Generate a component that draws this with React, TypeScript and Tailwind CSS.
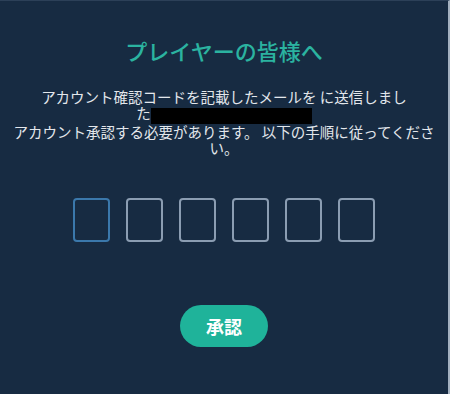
import { useState } from "react";

const FONT = { fontFamily: '"Noto Sans CJK JP", "Noto Sans", sans-serif' };

export default function App() {
  const [code, setCode] = useState(["", "", "", "", "", ""]);

  function zetCijfer(i: number, v: string) {
    const volgende = [...code];
    volgende[i] = v.slice(-1);
    setCode(volgende);
  }

  return (
    <main
      className="w-[450px] h-[394px] bg-[#172b42] border-t border-[#2c4058] border-r-2 border-r-[#a3b0bf] flex flex-col items-center"
      style={FONT}
    >
      <h1 className="mt-[34px] text-[22px] leading-[30px] font-medium text-[#2bb3a0]">
        プレイヤーの皆様へ
      </h1>

      <p className="mt-[24px] w-[440px] text-center text-[14.5px] leading-[16px] text-[#e3e7ec]">
        アカウント確認コードを記載したメールを に送信しまし
        <br />
        た<span className="inline-block align-[-5px] w-[161px] h-[16px] bg-black" />
        <br />
        アカウント承認する必要があります。 以下の手順に従ってくださ
        <br />
        い。
      </p>

      <div className="mt-[42px] flex gap-[16px]">
        {code.map((c, i) => (
          <input
            key={i}
            value={c}
            onChange={(e) => zetCijfer(i, e.target.value)}
            className={
              "w-[37px] h-[44px] rounded-[4px] bg-transparent border-2 text-center text-white text-lg focus:outline-none " +
              (i === 0 ? "border-[#3b78ab]" : "border-[#8b9db2]")
            }
          />
        ))}
      </div>

      <button className="mt-[63px] w-[88px] h-[42px] rounded-full bg-[#1fb39a] text-white text-[18px] font-bold">
        承認
      </button>
    </main>
  );
}
